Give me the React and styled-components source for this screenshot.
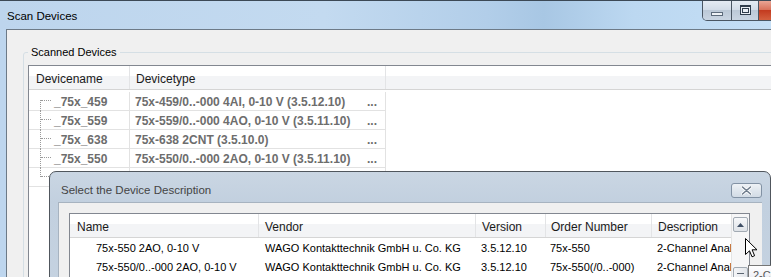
import React from "react";
import styled, { createGlobalStyle } from "styled-components";

const GlobalStyle = createGlobalStyle`
  html, body {
    margin: 0;
    padding: 0;
  }
  body {
    width: 771px;
    height: 277px;
    overflow: hidden;
    background: #ffffff;
    font-family: "Liberation Sans", Arial, sans-serif;
    font-size: 12px;
    color: #000;
  }
`;

const Desktop = styled.div`
  position: relative;
  width: 771px;
  height: 277px;
  overflow: hidden;
`;

/* ---------- main window ---------- */

const Window = styled.div`
  width: 812px;
  height: 300px;
  display: flex;
  flex-direction: column;
  border-top: 1px solid #3c4956;
  background: #bed6ee;
`;

const TitleBar = styled.div`
  height: 28px;
  flex: 0 0 28px;
  display: flex;
  align-items: flex-start;
  background: linear-gradient(
    90deg,
    #bdd5ed 0%,
    #c3daf0 40%,
    #b2cee9 60%,
    #a8c7e4 67%,
    #bcd8f1 78%,
    #c7e0f6 100%
  );
`;

const Title = styled.div`
  padding: 8px 0 0 7px;
  font-size: 11.5px;
  line-height: 14px;
  color: #000;
`;

const Buttons = styled.div`
  margin-left: auto;
  margin-right: 5px;
  display: flex;
  height: 19px;
  border: 1px solid #4a5663;
  border-top: none;
  border-radius: 0 0 5px 5px;
  overflow: hidden;
`;

const CaptionButton = styled.div`
  width: ${p => p.$w}px;
  height: 19px;
  display: flex;
  align-items: center;
  justify-content: center;
  border-left: ${p => (p.$first ? "none" : "1px solid #4a5663")};
  background: ${p =>
    p.$close
      ? "linear-gradient(#e9a595 0%, #d9735c 45%, #c33b20 50%, #d4603f 100%)"
      : "linear-gradient(#e4ebf3 0%, #d3dde8 45%, #bcc9d7 50%, #c9d5e2 100%)"};
`;

const MinGlyph = styled.span`
  width: 10px;
  height: 2px;
  margin-top: 6px;
  border: 1px solid #5c6b7b;
  background: #eef2f6;
`;

const MaxGlyph = styled.span`
  width: 7px;
  height: 5px;
  margin-top: -2px;
  border: 1px solid #2f3d4c;
  border-top-width: 2px;
  padding: 1px;
  background: #e9eef4;
  display: flex;
  span {
    flex: 1;
    border: 1px solid #2f3d4c;
  }
`;

const Frame = styled.div`
  flex: 1;
  display: flex;
  padding-left: 6px;
`;

const Client = styled.div`
  flex: 1;
  background: #f0f0f0;
  border-top: 1px solid #6d7a87;
  border-left: 1px solid #6d7a87;
  padding: 15px 0 0 16px;
`;

const GroupBox = styled.fieldset`
  margin: 0;
  padding: 0 0 0 4px;
  height: 300px;
  border: 1px solid #d5dfe5;
  border-radius: 3px;
  box-sizing: border-box;
  min-width: 0;
`;

const Legend = styled.legend`
  padding: 0 3px;
  font-size: 11px;
  line-height: 14px;
  color: #000;
`;

const ListView = styled.div`
  margin-top: 6px;
  border-top: 1px solid #828790;
  border-left: 1px solid #828790;
  background: #fff;
  height: 260px;
`;

const Header = styled.div`
  display: flex;
  height: 23px;
  border-bottom: 1px solid #d5d5d5;
  background: linear-gradient(#ffffff 0%, #ffffff 44%, #f3f4f6 44%, #f3f4f6 100%);
`;

const HeaderCell = styled.div`
  width: ${p => p.$w}px;
  flex: 0 0 ${p => p.$w}px;
  box-sizing: border-box;
  padding: 6px 0 0 ${p => p.$pad}px;
  line-height: 14px;
  font-size: 12px;
  color: #1a1a1a;
  border-right: 1px solid #e3e4e6;
  white-space: nowrap;
  overflow: hidden;
`;

const Body = styled.div`
  padding-top: 2px;
`;

const Row = styled.div`
  display: flex;
  width: 357px;
  border-bottom: 1px solid #e2e2e2;
`;

const Cell = styled.div`
  width: ${p => p.$w}px;
  flex: 0 0 ${p => p.$w}px;
  box-sizing: border-box;
  height: 18px;
  display: flex;
  border-right: 1px solid #e2e2e2;
  font-weight: bold;
  color: #6d6d6d;
  white-space: nowrap;
`;

const CellText = styled.span`
  padding-top: 3px;
  line-height: 14px;
  flex: 1;
`;

const More = styled.span`
  padding: 3px 8px 0 0;
  line-height: 14px;
`;

const TreeGuide = styled.span`
  position: relative;
  flex: 0 0 14px;
  margin-left: 11px;
  &::before {
    content: "";
    position: absolute;
    left: 0;
    top: ${p => (p.$first ? "8px" : "-1px")};
    bottom: ${p => (p.$last ? "9px" : "-1px")};
    border-left: 1px dotted #9a9a9a;
  }
  &::after {
    content: "";
    position: absolute;
    left: 1px;
    top: 8px;
    width: 10px;
    border-top: 1px dotted #9a9a9a;
  }
`;

/* ---------- dialog ---------- */

const Dialog = styled.div`
  position: absolute;
  left: 49px;
  top: 171px;
  width: 722px;
  height: 160px;
  box-sizing: border-box;
  border: 1px solid #50565d;
  border-radius: 7px 7px 0 0;
  background: linear-gradient(#cad6e3 0px, #c2d0df 30px, #c6d3e1 100%);
  display: flex;
  flex-direction: column;
`;

const DialogTitleBar = styled.div`
  height: 30px;
  flex: 0 0 30px;
  display: flex;
  align-items: flex-start;
`;

const DialogTitle = styled.div`
  padding: 11px 0 0 11px;
  font-size: 11.5px;
  line-height: 14px;
  color: #444;
`;

const DialogClose = styled.div`
  margin: 11px 8px 0 auto;
  width: 29px;
  height: 13px;
  border: 1px solid #8292a4;
  border-radius: 3px;
  background: linear-gradient(#eef2f6 0%, #dfe6ed 50%, #d2dbe5 100%);
  display: flex;
  align-items: center;
  justify-content: center;
`;

const DialogClient = styled.div`
  flex: 1;
  margin: 0 8px;
  background: #f0f0f0;
  border-top: 1px solid #a7b3c0;
  border-left: 1px solid #a7b3c0;
  padding: 10px 0 0 10px;
`;

const DescList = styled.div`
  width: 681px;
  height: 120px;
  box-sizing: border-box;
  border: 1px solid #828790;
  background: #fff;
  display: flex;
`;

const DescTable = styled.div`
  flex: 1;
  min-width: 0;
`;

const DescRow = styled.div`
  display: flex;
  height: 19px;
`;

const DescCell = styled.div`
  width: ${p => p.$w}px;
  flex: 0 0 ${p => p.$w}px;
  box-sizing: border-box;
  padding: 3px 0 0 ${p => p.$pad}px;
  line-height: 14px;
  font-size: 11px;
  color: #000;
  white-space: nowrap;
  overflow: hidden;
`;

const ScrollBar = styled.div`
  width: 17px;
  flex: 0 0 17px;
  border-left: 1px solid #e4e4e4;
  background: #f6f6f7;
  display: flex;
  flex-direction: column;
`;

const ScrollButton = styled.div`
  width: 13px;
  height: 13px;
  margin: 3px 0 0 1px;
  border: 1px solid #a2aab3;
  border-radius: 2px;
  background: linear-gradient(#f7f8fa, #dfe3e8);
  display: flex;
  align-items: center;
  justify-content: center;
`;

const ScrollThumb = styled.div`
  width: 13px;
  height: 20px;
  margin: 35px 0 0 1px;
  border: 1px solid #a2aab3;
  border-radius: 2px;
  background: linear-gradient(90deg, #f4f5f7, #e2e5ea);
  display: flex;
  justify-content: center;
  span {
    width: 7px;
    height: 1px;
    margin-top: 5px;
    background: #5a6470;
  }
`;

const Tooltip = styled.div`
  position: absolute;
  left: 748px;
  top: 265px;
  padding: 2px 4px;
  border: 1px solid #767676;
  background: linear-gradient(#ffffff, #e4e5f0);
  font-size: 11px;
  line-height: 14px;
  color: #575757;
  white-space: nowrap;
`;

const Cursor = styled.svg`
  position: absolute;
  left: 745px;
  top: 238px;
`;

const scanned = [
  { name: "_75x_459", type: "75x-459/0..-000 4AI, 0-10 V (3.5.12.10)" },
  { name: "_75x_559", type: "75x-559/0..-000 4AO, 0-10 V (3.5.11.10)" },
  { name: "_75x_638", type: "75x-638 2CNT (3.5.10.0)" },
  { name: "_75x_550", type: "75x-550/0..-000 2AO, 0-10 V (3.5.11.10)" },
  { name: "_75x_...", type: "" },
];

const columns = [
  { title: "Name", w: 189, pad: 7, cellPad: 26, key: "name" },
  { title: "Vendor", w: 217, pad: 6, cellPad: 6, key: "vendor" },
  { title: "Version", w: 70, pad: 6, cellPad: 5, key: "version" },
  { title: "Order Number", w: 106, pad: 5, cellPad: 4, key: "order" },
  { title: "Description", w: 80, pad: 6, cellPad: 5, key: "desc" },
];

const descriptions = [
  {
    name: "75x-550 2AO, 0-10 V",
    vendor: "WAGO Kontakttechnik GmbH u. Co. KG",
    version: "3.5.12.10",
    order: "75x-550",
    desc: "2-Channel Analog Output 0-10 V",
  },
  {
    name: "75x-550/0..-000 2AO, 0-10 V",
    vendor: "WAGO Kontakttechnik GmbH u. Co. KG",
    version: "3.5.12.10",
    order: "75x-550(/0..-000)",
    desc: "2-Channel Analog Output 0-10 V",
  },
];

const CloseX = () => (
  <svg width="11" height="9" viewBox="0 0 11 9">
    <path d="M1.5 1 L9.5 8 M9.5 1 L1.5 8" stroke="#ffffff" strokeWidth="3.2" strokeLinecap="round" />
    <path d="M1.5 1 L9.5 8 M9.5 1 L1.5 8" stroke="#6f7d8d" strokeWidth="1.6" strokeLinecap="round" />
  </svg>
);

const UpArrow = () => (
  <svg width="7" height="4" viewBox="0 0 7 4">
    <path d="M0 4 L3.5 0 L7 4 Z" fill="#3f4f66" />
  </svg>
);

export default function App() {
  return (
    <Desktop>
      <GlobalStyle />
      <Window>
        <TitleBar>
          <Title>Scan Devices</Title>
          <Buttons>
            <CaptionButton $w={28} $first>
              <MinGlyph />
            </CaptionButton>
            <CaptionButton $w={26}>
              <MaxGlyph>
                <span />
              </MaxGlyph>
            </CaptionButton>
            <CaptionButton $w={47} $close />
          </Buttons>
        </TitleBar>
        <Frame>
          <Client>
            <GroupBox>
              <Legend>Scanned Devices</Legend>
              <ListView>
                <Header>
                  <HeaderCell $w={101} $pad={7}>Devicename</HeaderCell>
                  <HeaderCell $w={256} $pad={6}>Devicetype</HeaderCell>
                </Header>
                <Body>
                  {scanned.map((d, i) => (
                    <Row key={i}>
                      <Cell $w={101}>
                        <TreeGuide $first={i === 0} $last={i === scanned.length - 1} />
                        <CellText>{d.name}</CellText>
                      </Cell>
                      <Cell $w={256}>
                        <CellText style={{ paddingLeft: 5 }}>{d.type}</CellText>
                        {d.type && <More>...</More>}
                      </Cell>
                    </Row>
                  ))}
                </Body>
              </ListView>
            </GroupBox>
          </Client>
        </Frame>
      </Window>

      <Dialog>
        <DialogTitleBar>
          <DialogTitle>Select the Device Description</DialogTitle>
          <DialogClose>
            <CloseX />
          </DialogClose>
        </DialogTitleBar>
        <DialogClient>
          <DescList>
            <DescTable>
              <Header>
                {columns.map(c => (
                  <HeaderCell key={c.key} $w={c.w} $pad={c.pad}>
                    {c.title}
                  </HeaderCell>
                ))}
              </Header>
              {descriptions.map((d, i) => (
                <DescRow key={i}>
                  {columns.map(c => (
                    <DescCell key={c.key} $w={c.w} $pad={c.cellPad}>
                      {d[c.key]}
                    </DescCell>
                  ))}
                </DescRow>
              ))}
            </DescTable>
            <ScrollBar>
              <ScrollButton>
                <UpArrow />
              </ScrollButton>
              <ScrollThumb>
                <span />
              </ScrollThumb>
            </ScrollBar>
          </DescList>
        </DialogClient>
      </Dialog>

      <Tooltip>2-Channel Analog Output 0-10 V</Tooltip>

      <Cursor width="13" height="21" viewBox="0 0 13 21">
        <path
          d="M0.5 0.5 L0.5 16.5 L4.5 12.8 L7 18.8 L9.6 17.7 L7.1 11.8 L12 11.8 Z"
          fill="#ffffff"
          stroke="#000000"
          strokeWidth="1"
          strokeLinejoin="miter"
        />
      </Cursor>
    </Desktop>
  );
}
